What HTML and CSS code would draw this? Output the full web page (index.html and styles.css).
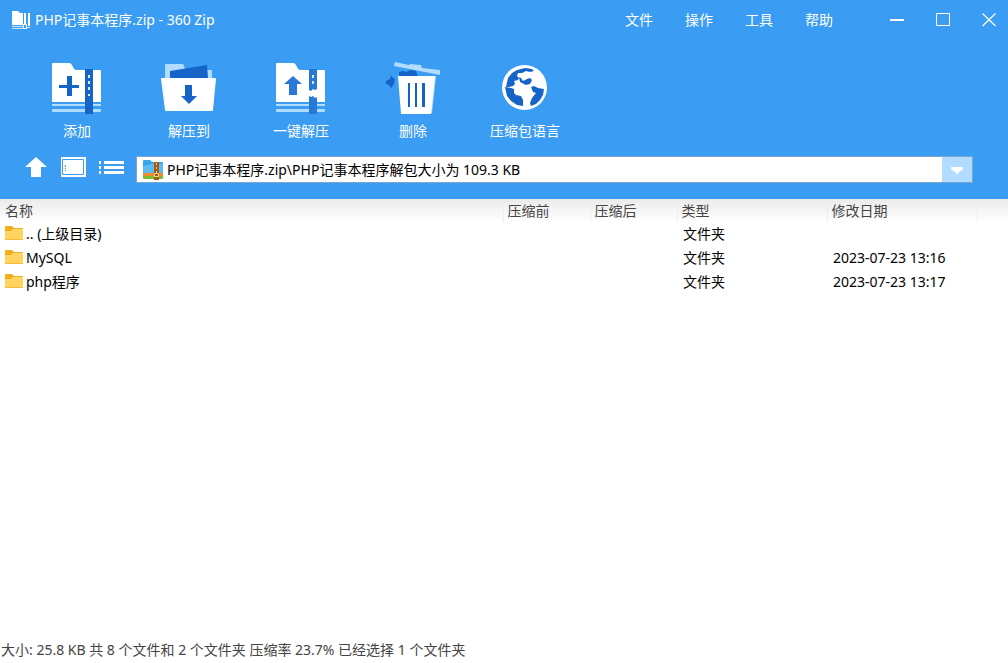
FILE: index.html
```
<!DOCTYPE html>
<html lang="zh-CN">
<head>
<meta charset="utf-8">
<meta name="viewport" content="width=device-width, initial-scale=1">
<title>PHP记事本程序.zip - 360 Zip</title>
<link rel="stylesheet" href="styles.css">
</head>
<body>
<svg class="defs" aria-hidden="true">
  <symbol id="folder" viewBox="0 0 18 16">
    <path d="M0 1q0-1 1-1h6l2 2h8q1 0 1 1v4H0z" fill="#f3ae1b"/>
    <path d="M0 5h6l2-2h10v10q0 1-1 1H1q-1 0-1-1z" fill="#ffd460"/>
    <path d="M0 13h18q0 1-1 1H1q-1 0-1-1z" fill="#f7bd3a"/>
  </symbol>
</svg>
<header class="top">
  <div class="titlebar">
    <svg class="app-icon" viewBox="0 0 20 20" aria-hidden="true">
      <path d="M1 1h6l2 2h3v12H1zM13 3h2v11h-2zM17 3h2v13h-2z" fill="#fff"/>
      <path d="M1 16h11v1H1zM1 18h11v1H1zM16 17h3v1h-3z" fill="#cfe7fd"/>
      <path d="M12.500 14.500h3v4h-3z" fill="#3a9cf2" stroke="#fff"/>
    </svg>
    <h1 class="title">PHP记事本程序.zip - 360 Zip</h1>
    <nav class="menu">
      <button type="button">文件</button>
      <button type="button">操作</button>
      <button type="button">工具</button>
      <button type="button">帮助</button>
    </nav>
    <div class="window-buttons">
      <button type="button" aria-label="最小化"><svg viewBox="0 0 16 16"><path d="M1 7h14v2H1z" fill="#fff"/></svg></button>
      <button type="button" aria-label="最大化"><svg viewBox="0 0 16 16"><path d="M1.500 1.500h13v12h-13z" fill="none" stroke="#fff"/></svg></button>
      <button type="button" aria-label="关闭"><svg viewBox="0 0 16 16"><path d="M1.500 1.500l13 12.500M14.500 1.500l-13 12.500" fill="none" stroke="#fff" stroke-width="1.200"/></svg></button>
    </div>
  </div>

  <div class="toolbar">
    <button type="button">
      <svg viewBox="0 0 56 56" aria-hidden="true">
        <path d="M4 3h16q2 0 3 2l2 4q1 1 3 1h23q1 0 1 1v31H3V4q0-1 1-1z" fill="#fff"/>
        <path d="M3 44h49v2H3zM3 49h49v2q0 1-1 1H4q-1 0-1-1z" fill="#b2dcff"/>
        <path d="M36 9h8v45h-8z" fill="#1664c8"/>
        <path d="M39 15h2v3h-2zM39 21h2v3h-2zM39 27h2v3h-2zM39 34h2v2h-2z" fill="#d8edff"/>
        <path d="M18 16h5v9h7v3h-7v8h-5v-8h-8v-3h8z" fill="#1664c8"/>
      </svg>
      <span>添加</span>
    </button>
    <button type="button">
      <svg viewBox="0 0 56 56" aria-hidden="true">
        <path d="M4 18V5q0-1 1-1h16q2 0 2 2 1 4 3 4h24q1 0 1 1v7z" fill="#b2dcff"/>
        <path d="M9 11l37-6 1 13H9z" fill="#1664c8"/>
        <path d="M0 19q0-1 1-1h53q1 0 1 1l-3 31q0 1-1 1H5q-1 0-1-1z" fill="#fff"/>
        <path d="M24 25h7v11h5l-8 8-8-8h4z" fill="#1664c8"/>
      </svg>
      <span>解压到</span>
    </button>
    <button type="button">
      <svg viewBox="0 0 56 56" aria-hidden="true">
        <path d="M4 3h16q2 0 3 2l2 4q1 1 3 1h23q1 0 1 1v31H3V4q0-1 1-1z" fill="#fff"/>
        <path d="M3 44h49v2H3zM3 49h49v2q0 1-1 1H4q-1 0-1-1z" fill="#b2dcff"/>
        <path d="M36 9h8v20l-2 1-2-1-2 2-2-1zM36 36l2 1 2-1 2 2 2-1v17h-8z" fill="#2878d6"/>
        <path d="M39 15h2v3h-2zM39 21h2v3h-2z" fill="#d8edff"/>
        <path d="M20 16l9 8h-5v11h-8V24h-5z" fill="#2878d6"/>
      </svg>
      <span>一键解压</span>
    </button>
    <button type="button">
      <svg viewBox="0 0 56 56" aria-hidden="true">
        <path d="M1 21l4-2 1-4 2 3 2 1-1 5-3 4-2-3-3-1zM14 16v-4l4-1 3 1 5-2 5 1 2 6z" fill="#1664c8"/>
        <path d="M10 2l14 3 1-1 11 1 1 3 18 2v5L9 6z" fill="#b2dcff"/>
        <path d="M45 16h6l-4 37-3 1z" fill="#b2dcff"/>
        <path d="M13 16h37l-4 38H16z" fill="#fff"/>
        <path d="M23 23h2v24h-2zM30 23h2v24h-2zM37 23h3v24h-3z" fill="#1664c8"/>
      </svg>
      <span>删除</span>
    </button>
    <button type="button">
      <svg viewBox="0 0 56 56" aria-hidden="true">
        <circle cx="27.500" cy="27.500" r="22.500" fill="#fff"/>
        <path d="M11 18l4-5 5-3 8-2 7 1 2 2-4 1-4-1-4 2-4 0-1 3 2 2-1 2-4 1 1 3-2 2-4 1-3 0z" fill="#1664c8"/>
        <path d="M8 27l6 1 3 1 0 4 2 2 5 1 2 4 0 6-6-1-6-4-4-5z" fill="#1664c8"/>
        <path d="M22 17l2 1 2 3 4-2 3-1 2 2-2 4-4 1-4-2-2-1z" fill="#1664c8"/>
        <path d="M34 27l3-1 4 2 6 1-1 6-3 5-4 4-5 2-1-3 2-5 4-5-3-1z" fill="#1664c8"/>
      </svg>
      <span>压缩包语言</span>
    </button>
  </div>

  <div class="address-row">
    <div class="view-buttons">
      <button type="button" aria-label="上一级"><svg viewBox="0 0 26 22"><path d="M14 1l11 10h-6v10H9V11H3z" fill="#fff"/></svg></button>
      <button type="button" aria-label="预览"><svg viewBox="0 0 26 22"><path d="M1 1h25v20H1z" fill="#fff"/><path d="M2.500 3.500h21v15h-21z" fill="none" stroke="#3a9cf2"/><path d="M5 9h1v2H5zM5 12h1v1H5zM5 14h1v1H5z" fill="#3a9cf2"/></svg></button>
      <button type="button" aria-label="列表"><svg viewBox="0 0 26 22"><path d="M1 5h2v3H1zM6 5h20v3H6zM1 10h2v3H1zM6 10h20v3H6zM1 15h2v3H1zM6 15h20v3H6z" fill="#fff"/></svg></button>
    </div>
    <div class="address">
      <svg class="zip-icon" viewBox="0 0 20 20" aria-hidden="true">
        <path d="M1 0h6l2 2h10q1 0 1 1v13H0V1q0-1 1-1z" fill="#36a5ea"/>
        <path d="M0 6l9-2h11v10H0z" fill="#5cbcf4"/>
        <path d="M0 13h20v4H0z" fill="#f08b2c"/>
        <path d="M0 16h20v2q0 1-1 1H1q-1 0-1-1z" fill="#79bd32"/>
        <path d="M11 2h5v18h-5z" fill="#a95816"/>
        <path d="M13 3h1v2h-1zM13 7h1v2h-1zM13 11h1v2h-1z" fill="#f6c66b"/>
        <path d="M11.500 13.500h4v3h-4z" fill="#a95816" stroke="#f8d790"/>
      </svg>
      <input type="text" aria-label="路径" value="PHP记事本程序.zip\PHP记事本程序解包大小为 109.3 KB">
      <button type="button" class="drop" aria-label="展开"><svg viewBox="0 0 12 8"><path d="M0 0h12v2L7 6 6 8 5 6 0 2z" fill="#fff"/></svg></button>
    </div>
  </div>
</header>

<main class="content">
  <table class="files">
    <colgroup><col class="c-name"><col class="c-size"><col class="c-size"><col class="c-type"><col class="c-date"><col class="c-end"></colgroup>
    <thead>
      <tr><th>名称</th><th>压缩前</th><th>压缩后</th><th>类型</th><th>修改日期</th><th></th></tr>
    </thead>
    <tbody>
      <tr><td><span class="entry"><svg><use href="#folder"/></svg>.. (上级目录)</span></td><td></td><td></td><td>文件夹</td><td></td><td></td></tr>
      <tr><td><span class="entry"><svg><use href="#folder"/></svg>MySQL</span></td><td></td><td></td><td>文件夹</td><td>2023-07-23 13:16</td><td></td></tr>
      <tr><td><span class="entry"><svg><use href="#folder"/></svg>php程序</span></td><td></td><td></td><td>文件夹</td><td>2023-07-23 13:17</td><td></td></tr>
    </tbody>
  </table>
</main>

<footer class="status">大小: 25.8 KB 共 8 个文件和 2 个文件夹 压缩率 23.7% 已经选择 1 个文件夹</footer>
</body>
</html>
```
FILE: styles.css
```
* {
  box-sizing: border-box;
}

body {
  margin: 0;
  min-height: 100vh;
  display: flex;
  flex-direction: column;
  background: #fff;
  color: #000;
  font: 14px/20px "Noto Sans", "Noto Sans CJK SC", sans-serif;
}

button,
input {
  margin: 0;
  padding: 0;
  border: 0;
  background: none;
  color: inherit;
  font: inherit;
}

svg {
  display: block;
  flex: none;
}

.defs {
  position: absolute;
  width: 0;
  height: 0;
}

.top {
  background: #3a9cf2;
  color: #fff;
  padding-bottom: 16px;
}

.titlebar {
  display: flex;
  align-items: center;
  height: 40px;
  padding-left: 11px;
}

.app-icon {
  width: 20px;
  height: 20px;
}

.title {
  flex: 1;
  margin: 0 0 0 4px;
  font-size: 14px;
  font-weight: 400;
}

.menu {
  display: flex;
}

.menu button {
  width: 60px;
}

.window-buttons {
  display: flex;
  margin-left: 25px;
}

.window-buttons button {
  width: 46px;
  display: grid;
  place-items: center;
}

.window-buttons button:last-child {
  width: 42px;
  padding-right: 4px;
  justify-content: end;
  padding-right: 11px;
}

.window-buttons svg {
  width: 16px;
  height: 16px;
}

.toolbar {
  display: flex;
  padding: 20px 21px 0;
}

.toolbar button {
  width: 112px;
  display: flex;
  flex-direction: column;
  align-items: center;
  gap: 5px;
}

.toolbar svg {
  width: 56px;
  height: 56px;
}

.address-row {
  display: flex;
  align-items: flex-start;
  padding: 15px 35px 0 22px;
}

.view-buttons {
  display: flex;
  gap: 12px;
  width: 114px;
}

.view-buttons svg {
  width: 26px;
  height: 22px;
}

.address {
  flex: 1;
  display: flex;
  align-items: center;
  height: 27px;
  padding-left: 6px;
  border: 1px solid #7ba7cf;
  background: #fff;
  color: #000;
}

.zip-icon {
  width: 20px;
  height: 20px;
}

.address input {
  flex: 1;
  min-width: 0;
  margin-left: 4px;
}

.drop {
  align-self: stretch;
  width: 30px;
  padding-top: 3px;
  display: grid;
  place-items: center;
  background: #b2dcff;
}

.drop svg {
  width: 12px;
  height: 8px;
}

.content {
  flex: 1;
}

.files {
  width: 100%;
  table-layout: fixed;
  border-collapse: collapse;
}

.c-size {
  width: 87px;
}

.c-type {
  width: 150px;
}

.c-date {
  width: 150px;
}

.c-end {
  width: 31px;
}

.files thead {
  background: linear-gradient(#ebebeb, #fff);
}

.files th {
  height: 23px;
  padding: 0 4px;
  color: #444;
  font-weight: 400;
  text-align: left;
  border-right: 1px solid #eee;
}

.files th:first-child {
  padding-left: 5px;
}

.files th:last-child {
  border-right: 0;
}

.files td {
  height: 24px;
  padding: 0 6px;
}

.files td:first-child {
  padding-left: 5px;
}

.entry {
  display: flex;
  align-items: center;
  gap: 3px;
}

.entry svg {
  width: 18px;
  height: 16px;
}

.status {
  padding: 0 1px 3px;
  color: #444;
}
```
